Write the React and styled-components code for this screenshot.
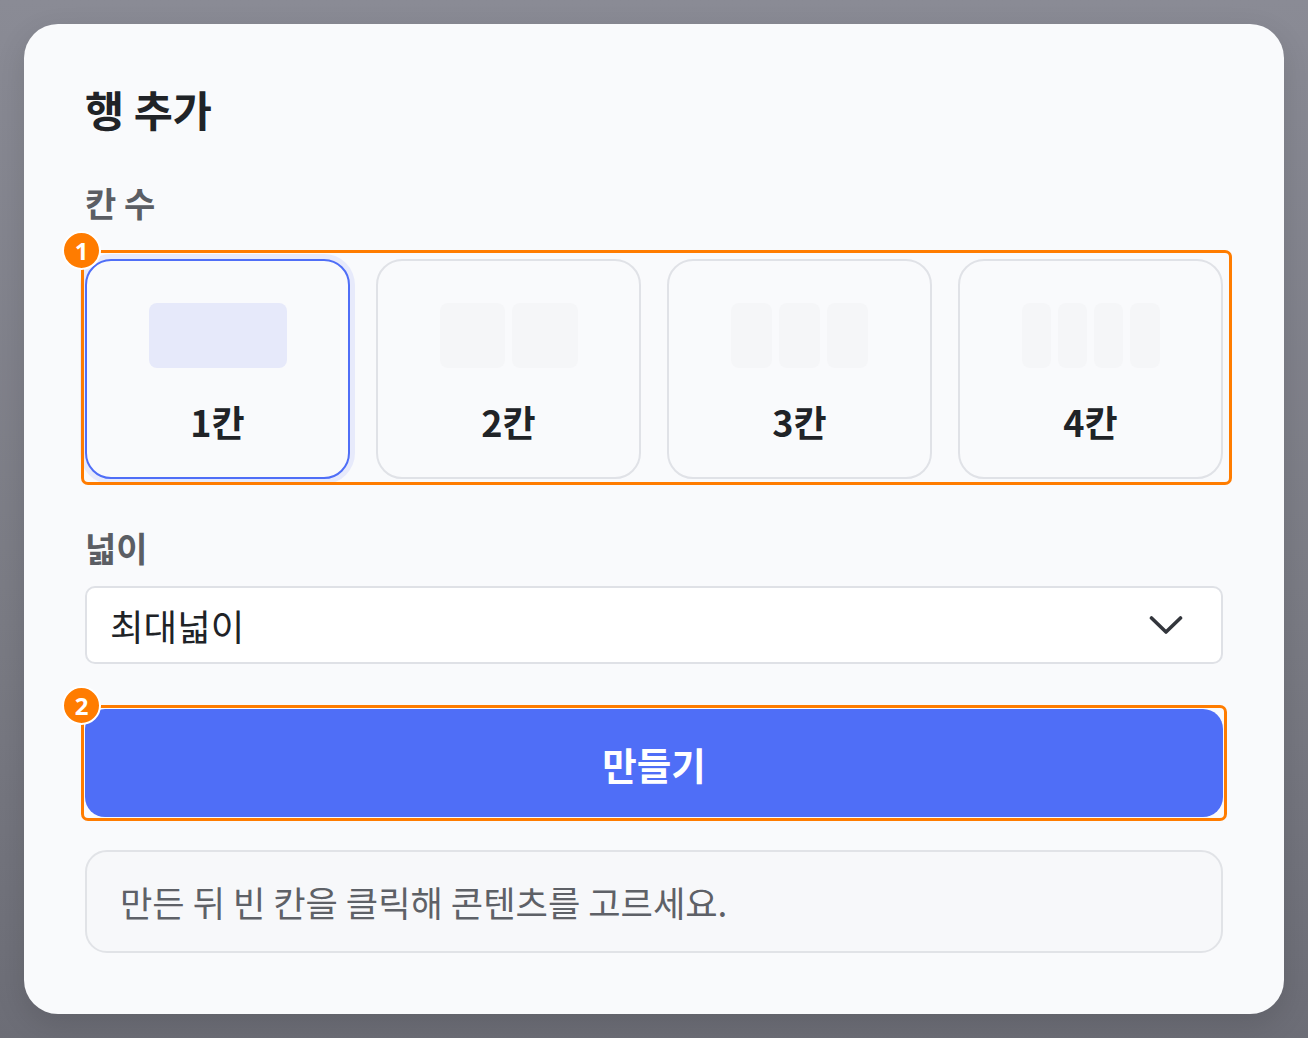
import React from "react";
import styled, { createGlobalStyle } from "styled-components";

const GlobalStyle = createGlobalStyle`
  html, body {
    margin: 0;
    padding: 0;
  }
  body {
    font-family: "Noto Sans CJK KR", "Noto Sans", sans-serif;
    background: linear-gradient(180deg, #8a8b95 0%, #7a7b84 60%, #6c6d76 100%);
    min-height: 1038px;
  }
`;

const Page = styled.div`
  padding: 24px;
  box-sizing: border-box;
  width: 1308px;
  height: 1038px;
`;

const Dialog = styled.div`
  background: #f9fafc;
  border-radius: 34px;
  height: 990px;
  box-sizing: border-box;
  padding: 60px 61px 0 61px;
  display: flex;
  flex-direction: column;
  box-shadow: 0 10px 30px rgba(0, 0, 0, 0.12);
`;

const Title = styled.h2`
  margin: 0;
  font-size: 42.5px;
  line-height: 50px;
  font-weight: 700;
  color: #202327;
`;

const Label = styled.div`
  font-size: 34px;
  line-height: 40px;
  font-weight: 600;
  color: #5b5e64;
  margin-top: ${(p) => p.$top}px;
`;

const Marked = styled.div`
  position: relative;
  margin-top: ${(p) => p.$top}px;
`;

const Annotation = styled.div`
  position: absolute;
  top: ${(p) => p.$t}px;
  left: ${(p) => p.$l}px;
  right: ${(p) => p.$r}px;
  bottom: ${(p) => p.$b}px;
  border: 3px solid #ff7c00;
  border-radius: 7px;
  pointer-events: none;
`;

const Badge = styled.span`
  position: absolute;
  top: -22px;
  left: -22px;
  width: 35px;
  height: 35px;
  border-radius: 50%;
  background: #ff7c00;
  border: 2px solid #ffffff;
  color: #ffffff;
  font-family: "Noto Sans", "Liberation Sans", sans-serif;
  font-weight: 700;
  font-size: 24px;
  line-height: 35px;
  text-align: center;
`;

const OptionGrid = styled.div`
  display: grid;
  grid-template-columns: repeat(4, 1fr);
  gap: 26px;
`;

const Option = styled.button`
  height: 220px;
  box-sizing: border-box;
  padding: 42px 0 0;
  margin: 0;
  background: #f9fafc;
  border: 2px solid ${(p) => (p.$active ? "#4f6ef7" : "#e0e2e7")};
  border-radius: 26px;
  box-shadow: ${(p) => (p.$active ? "0 0 0 5px #e7eafb" : "none")};
  display: flex;
  flex-direction: column;
  align-items: center;
  gap: 31px;
  font-family: inherit;
  cursor: pointer;
`;

const Preview = styled.div`
  width: 138px;
  height: 65px;
  display: flex;
  gap: 7px;
`;

const PreviewCell = styled.div`
  flex: 1;
  border-radius: 8px;
  background: ${(p) => (p.$active ? "#e6e9fa" : "#f5f6f8")};
`;

const OptionLabel = styled.span`
  font-size: 36px;
  line-height: 44px;
  font-weight: 700;
  color: #202327;
`;

const Select = styled.div`
  margin-top: 18px;
  height: 78px;
  box-sizing: border-box;
  background: #ffffff;
  border: 2px solid #dfe1e6;
  border-radius: 10px;
  display: flex;
  align-items: center;
  justify-content: space-between;
  padding: 0 38px 0 23px;
  font-size: 36.5px;
  color: #202327;
`;

const CreateButton = styled.button`
  width: 100%;
  height: 108px;
  display: block;
  margin: 0;
  border: none;
  border-radius: 20px;
  background: #4f6ef7;
  color: #ffffff;
  font-family: inherit;
  font-size: 37.5px;
  font-weight: 700;
  cursor: pointer;
`;

const Hint = styled.div`
  margin-top: 33px;
  height: 103px;
  box-sizing: border-box;
  border: 2px solid #e1e3e7;
  border-radius: 22px;
  background: #f7f8fa;
  display: flex;
  align-items: center;
  padding-left: 33px;
  font-size: 35.2px;
  color: #5e6167;
`;

const Chevron = () => (
  <svg width="34" height="22" viewBox="0 0 34 22" fill="none">
    <path
      d="M2.5 4 L17 18 L31.5 4"
      stroke="#33363c"
      strokeWidth="3.6"
      strokeLinecap="round"
      strokeLinejoin="round"
    />
  </svg>
);

const options = [1, 2, 3, 4];

const App = () => {
  return (
    <Page>
      <GlobalStyle />
      <Dialog>
        <Title>행 추가</Title>
        <Label $top={49}>칸 수</Label>
        <Marked $top={36}>
          <OptionGrid>
            {options.map((n) => (
              <Option key={n} $active={n === 1}>
                <Preview>
                  {Array.from({ length: n }).map((_, i) => (
                    <PreviewCell key={i} $active={n === 1} />
                  ))}
                </Preview>
                <OptionLabel>{n}칸</OptionLabel>
              </Option>
            ))}
          </OptionGrid>
          <Annotation $t={-9} $l={-4} $r={-9} $b={-6}>
            <Badge>1</Badge>
          </Annotation>
        </Marked>
        <Label $top={49}>넓이</Label>
        <Select>
          <span>최대넓이</span>
          <Chevron />
        </Select>
        <Marked $top={45}>
          <CreateButton>만들기</CreateButton>
          <Annotation $t={-4} $l={-4} $r={-4} $b={-4}>
            <Badge>2</Badge>
          </Annotation>
        </Marked>
        <Hint>만든 뒤 빈 칸을 클릭해 콘텐츠를 고르세요.</Hint>
      </Dialog>
    </Page>
  );
};

export default App;
